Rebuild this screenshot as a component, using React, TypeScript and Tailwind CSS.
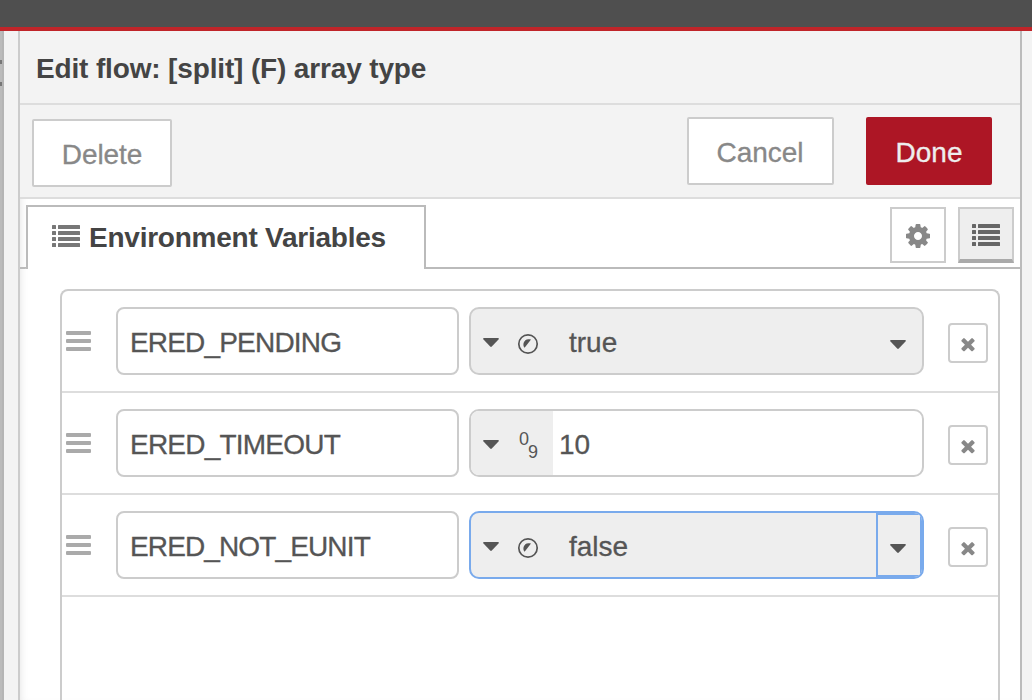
import React from "react";

type Kind = "bool" | "num";
type EnvVar = { name: string; kind: Kind; value: string; focused?: boolean };

const vars: EnvVar[] = [
  { name: "ERED_PENDING", kind: "bool", value: "true" },
  { name: "ERED_TIMEOUT", kind: "num", value: "10" },
  { name: "ERED_NOT_EUNIT", kind: "bool", value: "false", focused: true },
];

const nameSpacing: Record<string, string> = {
  ERED_PENDING: "tracking-[-0.82px]",
  ERED_TIMEOUT: "tracking-[-0.78px]",
  ERED_NOT_EUNIT: "tracking-[-0.87px]",
};

const COG =
  "M1152 896q0-106-75-181t-181-75-181 75-75 181 75 181 181 75 181-75 75-181zm512-109v222q0 12-8 23t-20 13l-185 28q-19 54-39 91 35 50 107 138 10 12 10 25t-9 23q-27 37-99 108t-94 71q-12 0-26-9l-138-108q-44 23-91 38-16 136-29 186-7 28-36 28h-222q-14 0-24.5-8.5t-11.5-21.5l-28-184q-49-16-90-37l-141 107q-10 9-25 9-14 0-25-11-126-114-165-168-7-10-7-23 0-12 8-23 15-21 51-66.5t54-70.5q-27-50-41-99l-183-27q-13-2-21-12.5t-8-23.5v-222q0-12 8-23t19-13l186-28q14-46 39-92-40-57-107-138-10-12-10-24 0-10 9-23 26-36 98.5-107.5t94.5-71.5q13 0 26 10l138 107q44-23 91-38 16-136 29-186 7-28 36-28h222q14 0 24.5 8.5t11.5 21.5l28 184q49 16 90 37l142-107q9-9 24-9 13 0 25 10 129 119 165 170 7 8 7 22 0 12-8 23-15 21-51 66.5t-54 70.5q26 50 41 98l183 28q13 2 21 12.5t8 23.5z";
const TIMES =
  "M1490 1322q0 40-28 68l-136 136q-28 28-68 28t-68-28l-294-294-294 294q-28 28-68 28t-68-28l-136-136q-28-28-28-68t28-68l294-294-294-294q-28-28-28-68t28-68l136-136q28-28 68-28t68 28l294 294 294-294q28-28 68-28t68 28l136 136q28 28 28 68t-28 68l-294 294 294 294q28 28 28 68z";

function ListIcon({ className }: { className: string }) {
  return (
    <svg viewBox="0 0 28 22" className={`h-[22px] w-7 shrink-0 ${className}`} fill="currentColor">
      {[0, 6, 12, 18].map((y) => (
        <g key={y}>
          <rect x="0" y={y} width="4" height="4" rx="0.5" />
          <rect x="6" y={y} width="22" height="4" rx="0.5" />
        </g>
      ))}
    </svg>
  );
}

function Caret({ className }: { className: string }) {
  return (
    <svg viewBox="0 0 16 9" className={`h-[9px] w-4 shrink-0 text-[#555] ${className}`} fill="currentColor">
      <path d="M1 0H15Q16.5 .2 15.5 1.4L8.8 8.5Q8 9.3 7.2 8.5L.5 1.4Q-.5 .2 1 0Z" />
    </svg>
  );
}

function BoolIcon() {
  return (
    <svg viewBox="0 0 22 22" className="mt-[5px] ml-[18px] h-[22px] w-[22px] shrink-0 text-[#555]">
      <circle cx="11" cy="11" r="9.2" fill="none" stroke="currentColor" strokeWidth="1.7" />
      <path d="M14 6.4L7.6 14.8C5.2 12 6.4 6.6 11.4 6.2Q13 6 14 6.4Z" fill="currentColor" />
    </svg>
  );
}

function TypedInput({ v }: { v: EnvVar }) {
  if (v.kind === "num") {
    return (
      <div className="ml-2.5 flex h-[68px] w-[455px] overflow-hidden rounded-[10px] border-2 border-[#ccc] bg-white">
        <div className="flex w-[82px] items-center bg-[#eee]">
          <Caret className="mt-[3px] ml-3" />
          <div className="mt-3 ml-5 flex text-[18px] leading-5 text-[#555]">
            <span className="-mt-2">0</span>
            <span className="mt-[5px] -ml-px">9</span>
          </div>
        </div>
        <span className="pl-[6px] text-[28px] leading-[68px] text-[#555] [-webkit-text-stroke:0.3px]">{v.value}</span>
      </div>
    );
  }
  return (
    <div
      className={`ml-2.5 flex h-[68px] w-[455px] items-center overflow-hidden rounded-[10px] border-2 bg-[#eee] ${
        v.focused ? "border-[#79aaec]" : "border-[#ccc]"
      }`}
    >
      <Caret className="mt-[3px] ml-3" />
      <BoolIcon />
      <span className="ml-[30px] flex-1 pt-[3px] text-[28px] leading-[63px] text-[#555] [-webkit-text-stroke:0.3px]">{v.value}</span>
      <span
        className={`flex h-16 w-[46px] items-center justify-center border-2 pt-[7px] pr-[2px] ${
          v.focused ? "border-[#79aaec]" : "border-transparent"
        }`}
      >
        <Caret className="" />
      </span>
    </div>
  );
}

function Row({ v }: { v: EnvVar }) {
  return (
    <li className="flex h-[102px] items-center border-b-2 border-[#ddd] pl-1">
      <div className="flex w-[25px] flex-col gap-1">
        <i className="h-1 rounded-[1px] bg-[#aaa]" />
        <i className="h-1 rounded-[1px] bg-[#aaa]" />
        <i className="h-1 rounded-[1px] bg-[#aaa]" />
      </div>
      <div
        className={`ml-[25px] h-[68px] w-[343px] rounded-lg border-2 border-[#ccc] bg-white pl-3 text-[28px] leading-[68px] text-[#555] [-webkit-text-stroke:0.3px] ${nameSpacing[v.name]}`}
      >
        {v.name}
      </div>
      <TypedInput v={v} />
      <button className="mt-1 ml-6 flex h-10 w-10 items-center justify-center rounded-[4px] border-2 border-[#ccc] bg-white pt-px text-[#888]">
        <svg viewBox="0 0 1792 1792" className="h-5 w-5" fill="currentColor">
          <path d={TIMES} />
        </svg>
      </button>
    </li>
  );
}

export default function App() {
  return (
    <div className="flex h-[700px] w-[1032px] flex-col overflow-hidden bg-[#f3f3f3] font-['Liberation_Sans',Arial,sans-serif]">
      <header className="h-[31px] shrink-0 border-b-4 border-[#c02429] bg-[#4f4f4f]" />
      <div className="flex min-h-0 flex-1">
        <div className="flex w-1 shrink-0 flex-col border-r-2 border-[#b5b5b5] bg-[#bbb]">
          <i className="mt-[29px] h-1 bg-[#777]" />
          <i className="mt-[18px] h-1 bg-[#777]" />
        </div>
        <div className="w-3.5 shrink-0" />
        <main className="flex w-[1004px] shrink-0 flex-col border-r-2 border-l-2 border-r-[#bbb] border-l-[#ccc] bg-white shadow-[inset_6px_0_8px_-6px_rgba(0,0,0,0.12)]">
          <h1 className="h-[74px] shrink-0 border-b-2 border-[#ddd] bg-[#f3f3f3] pl-4 text-[28px] leading-[75px] font-bold tracking-[-0.15px] text-[#444]">
            Edit flow: [split] (F) array type
          </h1>
          <div className="flex h-[94px] shrink-0 items-start border-b-2 border-[#ddd] bg-[#f3f3f3] pt-3 pl-3 text-[28px] [-webkit-text-stroke:0.3px]">
            <button className="mt-0.5 h-[68px] w-[140px] rounded-[2px] border-2 border-[#ccc] bg-white pt-[3px] tracking-[-0.1px] text-[#888]">Delete</button>
            <button className="ml-[515px] h-[68px] w-[147px] rounded-[2px] border-2 border-[#ccc] bg-white pt-[3px] pr-px text-[#888]">Cancel</button>
            <button className="ml-8 h-[68px] w-[126px] rounded-[2px] bg-[#ad1625] pt-[3px] text-[#eee]">Done</button>
          </div>
          <nav className="flex h-[70px] shrink-0">
            <div className="w-[7px] rounded-br-[2px] border-b-2 border-[#bbb]" />
            <div className="mt-1.5 -ml-px flex w-[400px] items-center border-2 border-b-0 border-[#bbb] pb-[1px] pl-6">
              <ListIcon className="-mt-1 text-[#777]" />
              <span className="ml-[9px] text-[28px] font-bold tracking-[-0.24px] whitespace-nowrap text-[#444]">Environment Variables</span>
            </div>
            <div className="-ml-px flex flex-1 justify-end gap-3 border-b-2 border-[#bbb] pt-2 pr-1.5">
              <button className="flex h-14 w-14 items-center justify-center border-2 border-[#ccc] bg-white text-[#888]">
                <svg viewBox="0 0 1792 1792" className="mt-0.5 h-7 w-7" fill="currentColor">
                  <path d={COG} />
                </svg>
              </button>
              <button className="flex h-14 w-14 items-center justify-center border-2 border-b-4 border-[#ccc] border-b-[#aaa] bg-[#eee] pt-[2px] pr-px text-[#666]">
                <ListIcon className="" />
              </button>
            </div>
          </nav>
          <ul className="mt-5 mr-5 ml-10 min-h-0 flex-1 rounded-t-lg border-2 border-b-0 border-[#ccc]">
            {vars.map((v) => (
              <Row key={v.name} v={v} />
            ))}
          </ul>
        </main>
      </div>
    </div>
  );
}
